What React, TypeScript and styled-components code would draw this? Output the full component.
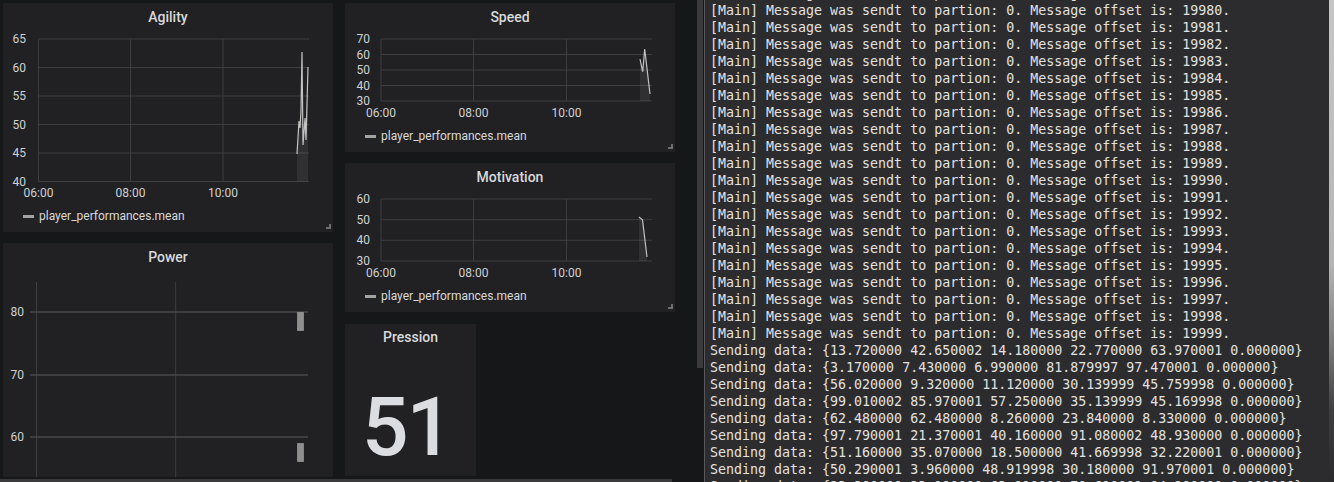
import styled, { createGlobalStyle } from "styled-components";

const GlobalStyle = createGlobalStyle`
  html, body {
    margin: 0;
    padding: 0;
    background: #161719;
  }
  body {
    width: 1334px;
    height: 482px;
    overflow: hidden;
  }
`;

type Tick = [string, number];

interface ChartValues {
    height: number;
    labelX: number;
    left: number;
    right: number;
    yTicks: Tick[];
    xTicks: Tick[];
    xLabelY: number;
    series: [number, number][];
    base: number;
}

const agility: ChartValues = {
    height: 172,
    labelX: 23,
    left: 35.5,
    right: 306,
    yTicks: [["65", 8], ["60", 36.5], ["55", 65], ["50", 93.5], ["45", 122], ["40", 150.5]],
    xTicks: [["06:00", 35.5], ["08:00", 127.5], ["10:00", 220]],
    xLabelY: 162,
    series: [[294, 123], [296, 90], [297, 97], [298, 79], [299, 21], [300, 114], [302, 87], [303, 109], [305, 36]],
    base: 150.5,
};

const speed: ChartValues = {
    height: 92,
    labelX: 25,
    left: 36,
    right: 307,
    yTicks: [["70", 8], ["60", 23.5], ["50", 39], ["40", 54.5], ["30", 70]],
    xTicks: [["06:00", 36], ["08:00", 128.5], ["10:00", 221.5]],
    xLabelY: 82,
    series: [[295, 28], [297.7, 40.7], [299.7, 18], [305, 63]],
    base: 70,
};

const motivation: ChartValues = {
    ...speed,
    yTicks: [["60", 8], ["50", 28.7], ["40", 49.3], ["30", 70]],
    series: [[294, 26], [297.5, 28.7], [302, 66]],
};

const sendings = [
    "{13.720000 42.650002 14.180000 22.770000 63.970001 0.000000}",
    "{3.170000 7.430000 6.990000 81.879997 97.470001 0.000000}",
    "{56.020000 9.320000 11.120000 30.139999 45.759998 0.000000}",
    "{99.010002 85.970001 57.250000 35.139999 45.169998 0.000000}",
    "{62.480000 62.480000 8.260000 23.840000 8.330000 0.000000}",
    "{97.790001 21.370001 40.160000 91.080002 48.930000 0.000000}",
    "{51.160000 35.070000 18.500000 41.669998 32.220001 0.000000}",
    "{50.290001 3.960000 48.919998 30.180000 91.970001 0.000000}",
    "{23.380000 33.190000 63.910000 70.610001 84.280000 0.000000}",
];

const logLines = [
    ...Array.from({ length: 21 }, (_, i) =>
        `[Main] Message was sendt to partion: 0. Message offset is: ${19979 + i}.`),
    ...sendings.map(s => `Sending data: ${s}`),
];

function TimeChart({ chart }: { chart: ChartValues }) {
    const points = chart.series.map(p => p.join(",")).join(" ");
    const first = chart.series[0][0];
    const last = chart.series[chart.series.length - 1][0];
    const area = `${first},${chart.base} ${points} ${last},${chart.base}`;
    const top = chart.yTicks[0][1];

    return (
        <ChartSvg width={330} height={chart.height}>
            {chart.yTicks.map(([label, y]) => (
                <g key={label}>
                    <line x1={chart.left} x2={chart.right} y1={y} y2={y} />
                    <text x={chart.labelX} y={y} textAnchor="end" dominantBaseline="central">{label}</text>
                </g>
            ))}
            {chart.xTicks.map(([label, x]) => (
                <g key={label}>
                    <line x1={x} x2={x} y1={top} y2={chart.base} />
                    <text x={x} y={chart.xLabelY} textAnchor="middle" dominantBaseline="central">{label}</text>
                </g>
            ))}
            <polygon className="area" points={area} />
            <polyline className="series" points={points} />
        </ChartSvg>
    );
}

function PowerChart() {
    const rows: Tick[] = [["80", 41], ["70", 104], ["60", 166]];

    return (
        <ChartSvg width={330} height={206}>
            {[33.5, 172.7].map(x => (
                <line key={x} x1={x} x2={x} y1={11} y2={206} />
            ))}
            {rows.map(([label, y]) => (
                <g key={label}>
                    <line className="strong" x1={27} x2={305} y1={y} y2={y} />
                    <text x={21} y={y} textAnchor="end" dominantBaseline="central">{label}</text>
                </g>
            ))}
            <rect className="bar" x={294.5} y={41.5} width={6} height={18} />
            <rect className="bar" x={294.5} y={172.5} width={6} height={18} />
        </ChartSvg>
    );
}

function GraphPanel({ title, chart, height }: { title: string; chart: ChartValues; height: number }) {
    return (
        <Panel $height={height}>
            <PanelTitle>{title}</PanelTitle>
            <TimeChart chart={chart} />
            <Legend>
                <LegendSwatch />
                player_performances.mean
            </Legend>
            <ResizeHandle />
        </Panel>
    );
}

export default function App() {
    return (
        <>
            <GlobalStyle />
            <Screen>
                <Dashboard>
                    <PanelGrid>
                        <Column>
                            <GraphPanel title="Agility" chart={agility} height={229} />
                            <Panel $height={234}>
                                <PanelTitle>Power</PanelTitle>
                                <PowerChart />
                            </Panel>
                        </Column>
                        <Column>
                            <GraphPanel title="Speed" chart={speed} height={149} />
                            <GraphPanel title="Motivation" chart={motivation} height={149} />
                            <StatPanel>
                                <StatTitle>Pression</StatTitle>
                                <StatValue>51</StatValue>
                            </StatPanel>
                        </Column>
                    </PanelGrid>
                    <BottomBar />
                </Dashboard>
                <ScrollTrack>
                    <ScrollThumb />
                </ScrollTrack>
                <Terminal>
                    <TerminalBody>
                        {logLines.map((line, i) => (
                            <LogLine key={i}>{line}</LogLine>
                        ))}
                    </TerminalBody>
                </Terminal>
                <DesktopEdge />
            </Screen>
        </>
    );
}

const Screen = styled.div`
    display: flex;
    width: 1334px;
    height: 482px;
    overflow: hidden;
    background: #161719;
`

const Dashboard = styled.div`
    flex: none;
    width: 697px;
    display: flex;
    flex-direction: column;
    font-family: Roboto, "Liberation Sans", sans-serif;
    color: #d8d9da;
`

const PanelGrid = styled.div`
    display: grid;
    grid-template-columns: 330px 330px;
    column-gap: 12px;
    padding: 3px 0 0 3px;
    height: 476px;
    box-sizing: border-box;
`

const Column = styled.div`
    display: flex;
    flex-direction: column;
    gap: 11px;
`

const Panel = styled.div<{ $height: number }>`
    position: relative;
    height: ${p => p.$height}px;
    background: #212124;
    flex: none;
`

const PanelTitle = styled.div`
    height: 28px;
    line-height: 28px;
    text-align: center;
    font-size: 14px;
    font-weight: 500;
    color: #d8d9da;
`

const ChartSvg = styled.svg`
    display: block;
    font-family: Roboto, "Liberation Sans", sans-serif;
    font-size: 12px;

    & text {
        fill: #d0d1d3;
    }

    & line {
        stroke: #3e3e41;
        stroke-width: 1;
    }

    & line.strong {
        stroke: #48484b;
        stroke-width: 1.5;
    }

    & .area {
        fill: rgba(255, 255, 255, 0.07);
    }

    & .series {
        fill: none;
        stroke: #c2c2c2;
        stroke-width: 1.2;
    }

    & .bar {
        fill: #8f8f8f;
        stroke: #b4b4b4;
        stroke-width: 1;
        stroke-dasharray: 1 1;
    }
`

const Legend = styled.div`
    display: flex;
    align-items: center;
    gap: 5px;
    height: 26px;
    padding-left: 20px;
    font-size: 12px;
    color: #d8d9da;
`

const LegendSwatch = styled.span`
    width: 11px;
    height: 3px;
    background: #a3a3a3;
`

const ResizeHandle = styled.span`
    position: absolute;
    right: 2px;
    bottom: 3px;
    width: 3px;
    height: 3px;
    border-right: 2px solid #6e6e70;
    border-bottom: 2px solid #6e6e70;
`

const StatPanel = styled.div`
    flex: none;
    width: 131px;
    height: 152px;
    margin-top: 1px;
    background: #212124;
    display: flex;
    flex-direction: column;
`

const StatTitle = styled.div`
    height: 26px;
    line-height: 26px;
    text-align: center;
    font-size: 14px;
    font-weight: 500;
`

const StatValue = styled.div`
    flex: 1;
    display: flex;
    align-items: center;
    justify-content: center;
    padding: 28px 8px 0 0;
    font-size: 82px;
    font-weight: 500;
    letter-spacing: -2px;
    color: #dcdde0;
`

const BottomBar = styled.div`
    width: 672px;
    height: 3px;
    margin-top: auto;
    background: #3a3a3d;
`

const ScrollTrack = styled.div`
    flex: none;
    width: 7px;
`

const ScrollThumb = styled.div`
    width: 6px;
    height: 368px;
    background: #3a3a3c;
`

const Terminal = styled.div`
    flex: 1;
    overflow: hidden;
    background: #2c2c2e;
    border-left: 1px solid #58585b;
    padding-left: 5px;
    font-family: "DejaVu Sans Mono", "Liberation Mono", monospace;
    font-size: 13.3px;
    line-height: 17px;
    color: #e2e2e2;
`

const TerminalBody = styled.div`
    margin-top: -15px;
`

const LogLine = styled.div`
    white-space: pre;
`

const DesktopEdge = styled.div`
    flex: none;
    width: 5px;
    background: linear-gradient(#c6c6c6 0%, #b4b4b4 55%, #7a7a7a 72%, #3e3e40 85%, #2a2a2c 100%);
`
